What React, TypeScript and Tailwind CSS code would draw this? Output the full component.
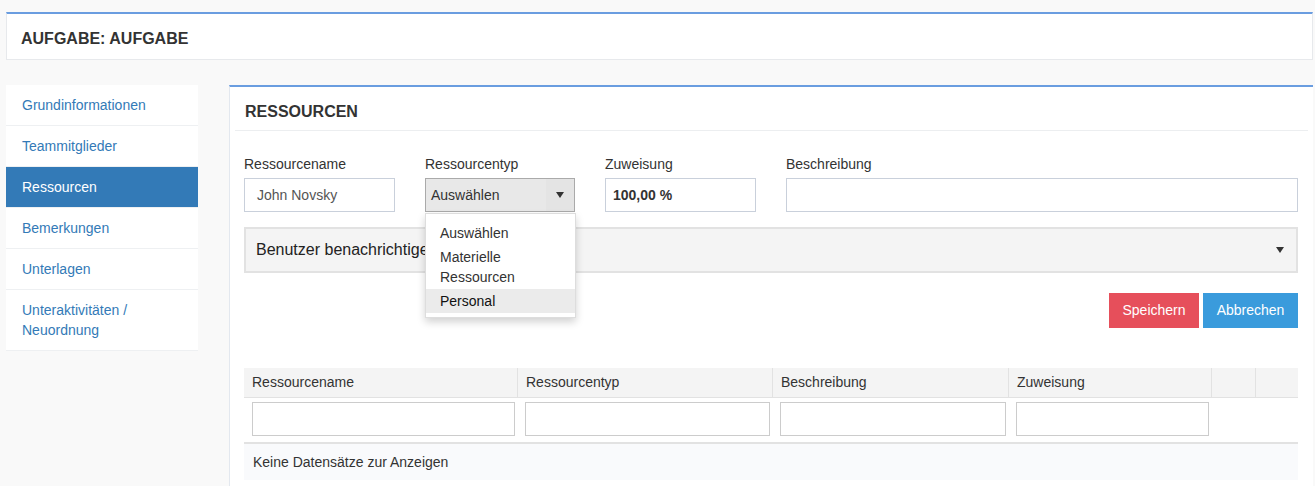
import React from "react";

const navItems = [
  "Grundinformationen",
  "Teammitglieder",
  "Ressourcen",
  "Bemerkungen",
  "Unterlagen",
];

const cols = "grid grid-cols-[273px_255px_236px_203px_44px_43px]";

function Caret() {
  return (
    <svg width="8" height="6" viewBox="0 0 8 6" className="fill-[#333]">
      <path d="M0 0h8L4 6z" />
    </svg>
  );
}

export default function App() {
  return (
    <div className="min-h-[486px] bg-[#f9f9f9] pl-[6px] pr-[2px] pt-[12px] font-['Liberation_Sans',Arial,sans-serif] text-[14px] text-[#333]">
      <div className="border border-t-2 border-[#e7e9ec] border-t-[#6a9de0] bg-white">
        <div className="flex h-[45px] items-center pl-[14px] pt-[4px] text-[16px] font-bold">
          AUFGABE: AUFGABE
        </div>
      </div>

      <div className="mt-[25px] flex items-start gap-[31px]">
        <div className="w-[192px] shrink-0">
          {navItems.map((item) => {
            const active = item === "Ressourcen";
            return (
              <div
                key={item}
                className={`h-[41px] border-b border-[#eef0f2] px-[16px] pt-[10px] leading-[20px] ${
                  active ? "bg-[#337ab7] text-white" : "bg-white text-[#337ab7]"
                }`}
              >
                {item}
              </div>
            );
          })}
          <div className="border-b border-[#eef0f2] bg-white px-[16px] py-[10px] leading-[20px] text-[#337ab7]">
            Unteraktivitäten /<br />
            Neuordnung
          </div>
        </div>

        <div className="min-h-[401px] flex-1 border-l border-t-2 border-[#e3e8ef] border-t-[#6a9de0] bg-white">
          <div className="mx-[5px] flex h-[44px] items-center border-b border-[#eceef0] pl-[10px] pt-[6px] text-[16px] font-bold">
            RESSOURCEN
          </div>

          <div className="pl-[14px] pr-[15px] pt-[23px]">
            <div className="flex">
              <div className="w-[181px]">
                <div className="h-[20px] leading-[20px]">Ressourcename</div>
                <div className="mt-[4px] flex h-[34px] w-[151px] items-center border border-[#c9d0db] pl-[12px] text-[#555]">
                  John Novsky
                </div>
              </div>
              <div className="relative w-[180px]">
                <div className="h-[20px] leading-[20px]">Ressourcentyp</div>
                <div className="mt-[4px] flex h-[34px] w-[150px] items-center border border-[#aaa] bg-[#e8e8e8] text-[#333]">
                  <span className="flex-1 pl-[5px]">Auswählen</span>
                  <span className="flex h-full w-[28px] items-center justify-center bg-[#e4e4e4]">
                    <Caret />
                  </span>
                </div>
                <div className="absolute left-0 top-[59px] z-10 w-[151px] border border-[#ddd] bg-white pb-[4px] pt-[7px] shadow-[0_4px_8px_rgba(0,0,0,0.18)]">
                  <div className="px-[14px] py-[2px] leading-[20px]">Auswählen</div>
                  <div className="px-[14px] py-[2px] leading-[20px]">
                    Materielle
                    <br />
                    Ressourcen
                  </div>
                  <div className="bg-[#ebebeb] px-[14px] py-[2px] leading-[20px] text-[#111]">
                    Personal
                  </div>
                </div>
              </div>
              <div className="w-[181px]">
                <div className="h-[20px] leading-[20px]">Zuweisung</div>
                <div className="mt-[4px] flex h-[34px] w-[151px] items-center border border-[#c9d0db] pl-[7px] font-bold">
                  100,00 %
                </div>
              </div>
              <div className="flex-1">
                <div className="h-[20px] leading-[20px]">Beschreibung</div>
                <div className="mt-[4px] h-[34px] border border-[#c9d0db]" />
              </div>
            </div>

            <div className="mt-[15px] flex h-[46px] items-center justify-between border-2 border-[#e2e2e2] bg-[#f4f4f4] pl-[10px] pr-[12px] text-[16px] text-[#222]">
              <span>Benutzer benachrichtigen</span>
              <Caret />
            </div>

            <div className="mt-[20px] flex justify-end gap-[4px]">
              <button className="h-[35px] w-[90px] bg-[#e64f5b] text-white">Speichern</button>
              <button className="h-[35px] w-[95px] bg-[#3a9bdc] text-white">Abbrechen</button>
            </div>

            <div className="mt-[40px]">
              <div className={`${cols} h-[30px] border-b border-[#e2e2e2] bg-[#f4f4f4]`}>
                {["Ressourcename", "Ressourcentyp", "Beschreibung", "Zuweisung", "", ""].map(
                  (h, i) => (
                    <div
                      key={i}
                      className={`flex items-center pl-[8px] ${i > 0 ? "border-l border-[#e2e2e2]" : ""}`}
                    >
                      {h}
                    </div>
                  )
                )}
              </div>
              <div className={`${cols} h-[46px] border-b-2 border-[#e2e2e2] py-[4px]`}>
                {[0, 1, 2, 3].map((i) => (
                  <div key={i} className="pl-[8px] pr-[2px]">
                    <div className="h-[34px] border border-[#ccc] bg-white" />
                  </div>
                ))}
              </div>
              <div className="flex h-[36px] items-center bg-[#f9fafc] pl-[9px]">
                Keine Datensätze zur Anzeigen
              </div>
            </div>
          </div>
        </div>
      </div>
    </div>
  );
}
